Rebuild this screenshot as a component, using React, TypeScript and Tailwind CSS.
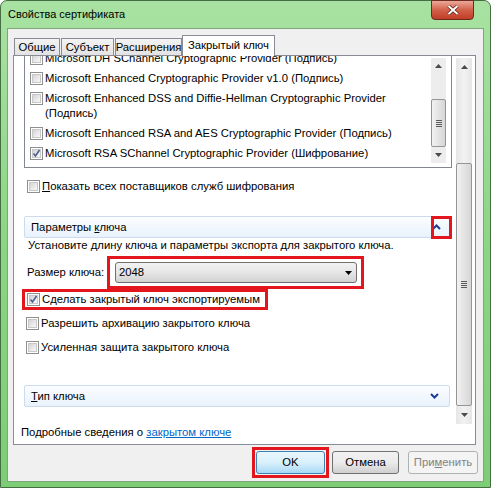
import React from 'react';

const Checkbox = ({ checked = false }: { checked?: boolean }) => (
  <span className="relative flex h-[13px] w-[13px] shrink-0 items-center justify-center border border-[#8e8f8f] bg-white">
    <span className="h-[9px] w-[9px] border border-[#c8c8c8] bg-linear-to-br from-[#d4d4d4] to-[#f9f9f9]" />
    {checked && (
      <svg className="absolute left-0 top-0" width="11" height="11" viewBox="0 0 11 11">
        <path d="M2.5 5.5 L4.5 8 L8.5 2" fill="none" stroke="#4c5f8f" strokeWidth="1.6" />
      </svg>
    )}
  </span>
);

const ArrowUp = () => (
  <svg width="7" height="4" viewBox="0 0 7 4">
    <path d="M0 4 L3.5 0 L7 4 Z" fill="#4a4a4a" />
  </svg>
);

const ArrowDown = () => (
  <svg width="7" height="4" viewBox="0 0 7 4">
    <path d="M0 0 L7 0 L3.5 4 Z" fill="#4a4a4a" />
  </svg>
);

const Grip = () => (
  <div className="flex flex-col gap-[1px]">
    <span className="h-[1px] w-[6px] bg-[#5a5a5a]" />
    <span className="h-[1px] w-[6px] bg-[#5a5a5a]" />
    <span className="h-[1px] w-[6px] bg-[#5a5a5a]" />
    <span className="h-[1px] w-[6px] bg-[#5a5a5a]" />
  </div>
);

const Chevron = ({ up }: { up?: boolean }) => (
  <svg width="9" height="6" viewBox="0 0 9 6">
    <path
      d={up ? 'M1 5 L4.5 1.5 L8 5' : 'M1 1 L4.5 4.5 L8 1'}
      fill="none"
      stroke="#1b3c93"
      strokeWidth="2"
    />
  </svg>
);

const listItems = [
  { text: 'Microsoft DH SChannel Cryptographic Provider (Подпись)', checked: false },
  { text: 'Microsoft Enhanced Cryptographic Provider v1.0 (Подпись)', checked: false },
  {
    text: 'Microsoft Enhanced DSS and Diffie-Hellman Cryptographic Provider',
    extra: '(Подпись)',
    checked: false,
  },
  { text: 'Microsoft Enhanced RSA and AES Cryptographic Provider (Подпись)', checked: false },
  { text: 'Microsoft RSA SChannel Cryptographic Provider (Шифрование)', checked: true },
];

export default function App() {
  return (
    <div className="h-[488px] w-[491px] overflow-hidden whitespace-nowrap bg-white font-['Liberation_Sans',Arial,sans-serif] text-[11.3px] leading-[15px] text-black">
      <div className="flex h-full flex-col rounded-t-[7px] border border-[#456f42] bg-linear-to-b from-[#a8e2a2] via-[#8bd684] to-[#7ccd75] px-[6px] pb-[5px]">
        {/* title bar */}
        <div className="relative flex h-[27px] shrink-0 items-center pl-[1px]">
          <span className="text-[11px] text-black">Свойства сертификата</span>
          <div className="absolute right-[10px] top-[-1px] flex h-[20px] w-[43px] items-center justify-center rounded-b-[4px] border border-[#6e2a20] bg-linear-to-b from-[#e9a898] via-[#d2604b] to-[#c13d25]">
            <svg width="12" height="10" viewBox="0 0 12 10">
              <path d="M1.5 1 L10.5 9 M10.5 1 L1.5 9" stroke="#5a1d14" strokeWidth="3.4" />
              <path d="M1.5 1 L10.5 9 M10.5 1 L1.5 9" stroke="#ffffff" strokeWidth="2" />
            </svg>
          </div>
        </div>

        {/* client */}
        <div className="flex flex-1 flex-col border border-[#7fa57b] bg-[#f0f0f0]">
          {/* tabs */}
          <div className="ml-[6px] mt-[6px] flex h-[20px] items-end">
            <div className="flex h-[17px] w-[46px] items-center justify-center border border-b-0 border-[#898c95] bg-linear-to-b from-[#f3f3f3] to-[#e3e3e3]">
              Общие
            </div>
            <div className="ml-[1px] flex h-[17px] w-[53px] items-center justify-center border border-b-0 border-[#898c95] bg-linear-to-b from-[#f3f3f3] to-[#e3e3e3]">
              Субъект
            </div>
            <div className="ml-[1px] flex h-[17px] w-[67px] items-center justify-center border border-b-0 border-[#898c95] bg-linear-to-b from-[#f3f3f3] to-[#e3e3e3]">
              Расширения
            </div>
            <div className="relative z-10 -mb-px flex h-[21px] w-[93px] items-start justify-center border border-b-0 border-[#898c95] bg-white pt-[2px]">
              Закрытый ключ
            </div>
          </div>

          {/* panel */}
          <div className="ml-[5px] flex h-[390px] w-[463px] flex-col border border-[#898c95] bg-white">
            <div className="flex h-[369px] shrink-0">
              {/* scroll content */}
              <div className="flex flex-1 flex-col overflow-hidden pl-[10px]">
                {/* list box */}
                <div className="flex h-[112px] shrink-0 border-x border-b border-[#828790]">
                  <div className="flex-1 overflow-hidden pl-[5px]">
                    <div className="-mt-[8px] flex flex-col">
                      {listItems.map((item, i) => (
                        <div key={i} className="flex items-start gap-[2px] py-[2.5px]">
                          <span className="mt-[1px]">
                            <Checkbox checked={item.checked} />
                          </span>
                          <div className="flex flex-col">
                            <span>{item.text}</span>
                            {item.extra && <span>{item.extra}</span>}
                          </div>
                        </div>
                      ))}
                    </div>
                  </div>
                  <div className="mr-[5px] mt-[2px] flex h-[105px] w-[15px] flex-col bg-[#ededed]">
                    <div className="flex h-[16px] items-center justify-center">
                      <ArrowUp />
                    </div>
                    <div className="h-[25px]" />
                    <div className="flex h-[48px] items-center justify-center rounded-[2px] border border-[#959595] bg-linear-to-r from-[#f2f2f2] to-[#d6d6d6]">
                      <Grip />
                    </div>
                    <div className="flex flex-1 items-center justify-center">
                      <ArrowDown />
                    </div>
                  </div>
                </div>

                <div className="ml-[3px] mt-[11px] flex items-center gap-[2px]">
                  <Checkbox />
                  <span>
                    <span className="underline">П</span>оказать всех поставщиков служб шифрования
                  </span>
                </div>

                {/* key parameters */}
                <div className="relative mt-[22px] flex h-[22px] shrink-0 items-center justify-between rounded-[2px] border border-[#cddcec] bg-linear-to-b from-[#fbfdff] to-[#e9f2fc] pl-[6px] pr-[10px]">
                  <span>
                    Параметры <span className="underline">к</span>люча
                  </span>
                  <Chevron up />
                  <div className="absolute right-[-1px] top-[-1px] h-[23px] w-[21px] border-[3px] border-[#e3161e]" />
                </div>
                <div className="ml-[4px]">Установите длину ключа и параметры экспорта для закрытого ключа.</div>

                <div className="ml-[3px] mt-[3px] flex items-center">
                  <span className="w-[80px]">Размер ключа:</span>
                  <div className="border-[3px] border-[#e3161e] py-[3px] pl-[5px] pr-[4px]">
                    <div className="flex h-[21px] w-[242px] items-center justify-between rounded-[3px] border border-[#707070] bg-linear-to-b from-[#f2f2f2] via-[#e6e6e6] to-[#d2d2d2] pl-[3px] pr-[4px]">
                      <span>2048</span>
                      <svg width="7" height="4" viewBox="0 0 7 4">
                        <path d="M0 0 L7 0 L3.5 4 Z" fill="#000" />
                      </svg>
                    </div>
                  </div>
                </div>

                <div className="-ml-[2px] flex w-[246px] items-center gap-[2px] border-[3px] border-[#e3161e] pl-[2px]">
                  <Checkbox checked />
                  <span>Сделать закрытый ключ экспортируемым</span>
                </div>

                <div className="ml-[2px] mt-[6px] flex items-center gap-[2px]">
                  <Checkbox />
                  <span>Разрешить архивацию закрытого ключа</span>
                </div>
                <div className="ml-[2px] mt-[9px] flex items-center gap-[2px]">
                  <Checkbox />
                  <span>Усиленная защита закрытого ключа</span>
                </div>

                {/* key type */}
                <div className="mt-[30px] flex h-[22px] w-[426px] shrink-0 items-center justify-between rounded-[2px] border border-[#cddcec] bg-linear-to-b from-[#fbfdff] to-[#e9f2fc] pl-[6px] pr-[10px]">
                  <span>
                    <span className="underline">Т</span>ип ключа
                  </span>
                  <Chevron />
                </div>
              </div>

              {/* outer scrollbar */}
              <div className="ml-[4px] mr-[3px] mt-[2px] flex h-[366px] w-[16px] flex-col bg-linear-to-r from-[#e6e6e6] via-[#f2f2f2] to-[#e6e6e6]">
                <div className="flex h-[17px] items-center justify-center">
                  <ArrowUp />
                </div>
                <div className="h-[88px]" />
                <div className="flex h-[243px] items-center justify-center rounded-[2px] border border-[#959595] bg-linear-to-r from-[#f2f2f2] to-[#d6d6d6]">
                  <Grip />
                </div>
                <div className="flex flex-1 items-center justify-center">
                  <ArrowDown />
                </div>
              </div>
            </div>

            <div className="pl-[7px]">
              Подробные сведения о <span className="text-[#0066cc] underline">закрытом ключе</span>
            </div>
          </div>

          {/* buttons */}
          <div className="mr-[5px] mt-[2px] flex items-center justify-end">
            <div className="border-[3px] border-[#e3161e] p-[1px]">
              <div className="flex h-[23px] w-[69px] items-center justify-center rounded-[3px] border border-[#3c7fb1] bg-linear-to-b from-[#eaf6fd] via-[#d9f0fc] to-[#a7d9f5]">
                OK
              </div>
            </div>
            <div className="ml-[3px] flex h-[23px] w-[67px] items-center justify-center rounded-[3px] border border-[#707070] bg-linear-to-b from-[#f2f2f2] via-[#ebebeb] to-[#cfcfcf]">
              Отмена
            </div>
            <div className="ml-[9px] flex h-[23px] w-[70px] items-center justify-center rounded-[3px] border border-[#adb2b5] bg-[#f4f4f4] text-[#838383]">
              При<span className="underline">м</span>енить
            </div>
          </div>
        </div>
      </div>
    </div>
  );
}
